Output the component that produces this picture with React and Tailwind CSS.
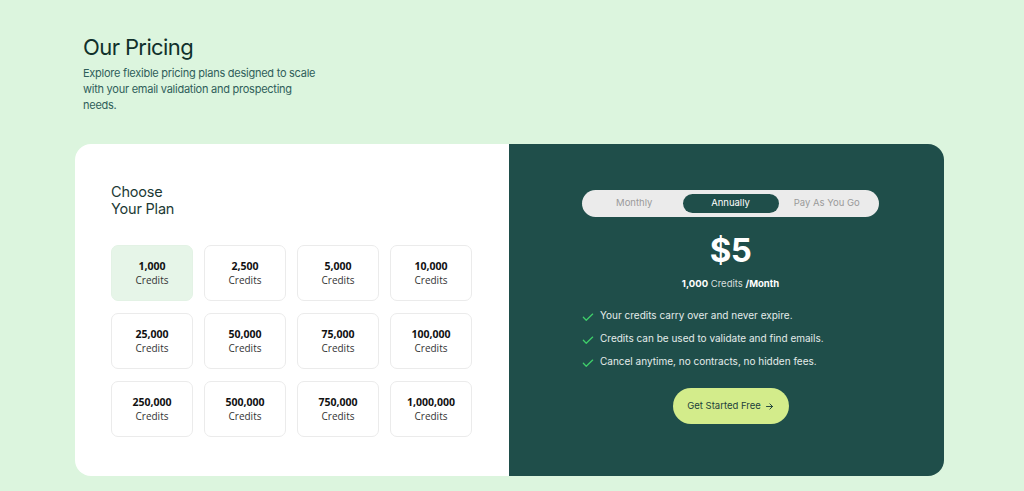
import React from "react";

const tiles = [
  "1,000", "2,500", "5,000", "10,000",
  "25,000", "50,000", "75,000", "100,000",
  "250,000", "500,000", "750,000", "1,000,000",
];

function Check() {
  return (
    <svg width="14" height="14" viewBox="0 0 24 24" fill="none" stroke="#3fcf6a" strokeWidth="2.2" strokeLinecap="round" strokeLinejoin="round" className="shrink-0 mt-[3px]">
      <path d="M4 12.5l5 5L20 7" />
    </svg>
  );
}

export default function App() {
  return (
    <div className="w-[1024px] h-[491px] bg-[#dcf5de] overflow-hidden font-['Inter',sans-serif]">
      <div className="pl-[83px] pt-[34px]">
        <h1 className="text-[22px] leading-[27px] text-[#10302b] tracking-[-0.6px]">Our Pricing</h1>
        <p className="mt-[4px] w-[240px] text-[11px] leading-[16px] text-[#2f5e5a] tracking-[-0.25px]">
          Explore flexible pricing plans designed to scale with your email validation and prospecting needs.
        </p>
      </div>
      <div className="ml-[75px] mt-[31px] w-[869px] h-[332px] flex rounded-[16px] overflow-hidden">
        <div className="w-[434px] bg-white pl-[36px] pt-[39px]">
          <h2 className="text-[14.5px] leading-[17px] text-[#1c3a35] tracking-[-0.2px]">Choose<br />Your Plan</h2>
          <div className="mt-[28px] grid grid-cols-[repeat(4,82px)] gap-x-[11px] gap-y-[12px]">
            {tiles.map((t, i) => (
              <div
                key={t}
                className={`h-[56px] rounded-[7px] border flex flex-col items-center justify-center font-['Open_Sans',sans-serif] ${
                  i === 0 ? "bg-[#e6f5e8] border-[#e3f2e5]" : "bg-white border-[#ebebeb]"
                }`}
              >
                <span className="text-[10.5px] leading-[14px] font-bold text-[#111]">{t}</span>
                <span className="text-[10px] leading-[14px] text-[#333]">Credits</span>
              </div>
            ))}
          </div>
        </div>
        <div className="flex-1 bg-[#1f4e4a] flex flex-col items-center pt-[46px] pl-[8px]">
          <div className="w-[297px] h-[27px] rounded-full bg-[#ebebeb] flex items-center px-[4px] text-[9.5px]">
            <div className="flex-1 text-center text-[#9a9a9a]">Monthly</div>
            <div className="w-[96px] h-[19px] rounded-full bg-[#1f4e4a] text-white flex items-center justify-center">Annually</div>
            <div className="flex-1 text-center text-[#9a9a9a]">Pay As You Go</div>
          </div>
          <div className="mt-[15px] text-[33px] leading-[36px] font-bold text-white tracking-[-0.5px]">$5</div>
          <div className="mt-[10px] text-[9.5px] leading-[12px] text-[#d6dedd]">
            <span className="font-bold text-white">1,000</span> Credits <span className="font-bold text-white">/Month</span>
          </div>
          <ul className="mt-[17px] self-start ml-[64px] flex flex-col gap-[6px] text-[10px] leading-[16px] text-[#e4ecea]">
            <li className="flex gap-[5px]"><Check />Your credits carry over and never expire.</li>
            <li className="flex gap-[5px]"><Check />Credits can be used to validate and find emails.</li>
            <li className="flex gap-[5px]"><Check />Cancel anytime, no contracts, no hidden fees.</li>
          </ul>
          <button className="mt-[18px] w-[116px] h-[36px] rounded-full bg-[#d3ec8b] text-[#1c3f3b] text-[9.5px] flex items-center justify-center gap-[4px]">
            Get Started Free
            <svg width="9" height="9" viewBox="0 0 24 24" fill="none" stroke="currentColor" strokeWidth="2.5" strokeLinecap="round" strokeLinejoin="round">
              <path d="M4 12h16M13 5l7 7-7 7" />
            </svg>
          </button>
        </div>
      </div>
    </div>
  );
}
